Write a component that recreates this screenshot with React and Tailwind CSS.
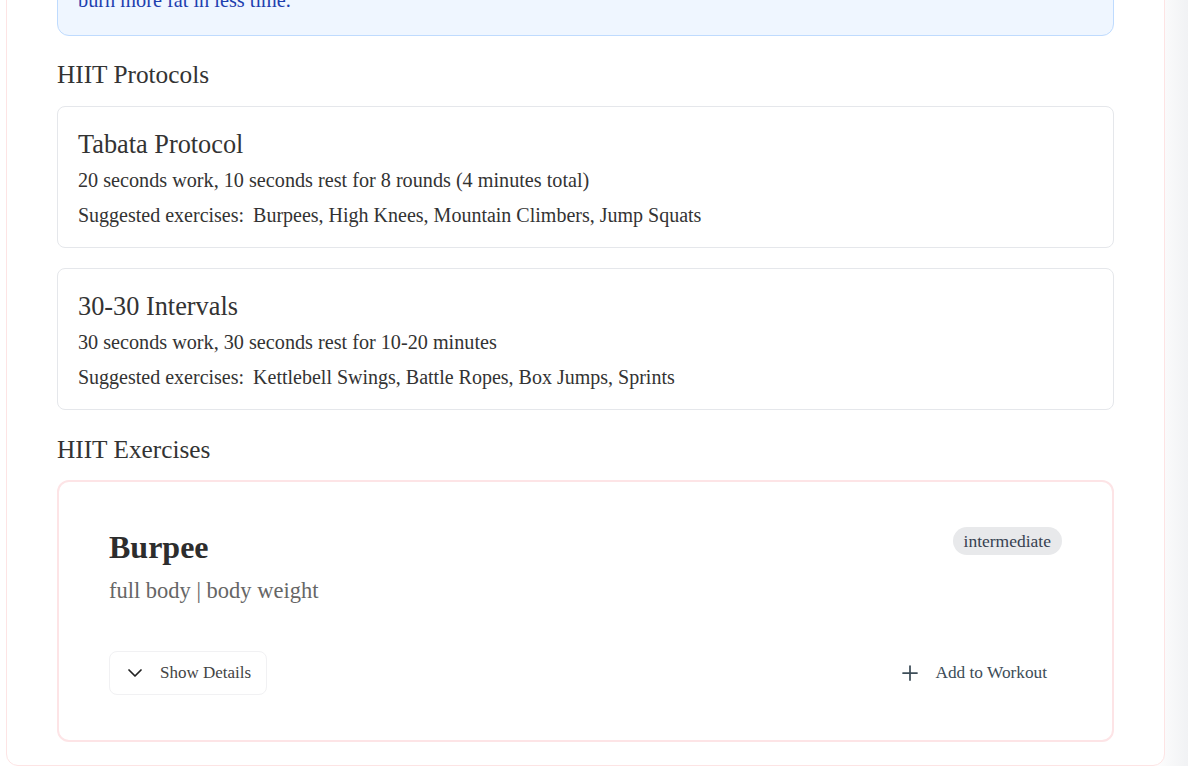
import React from "react";
import { ChevronDown, Plus } from "lucide-react";

const serif = { fontFamily: '"Liberation Serif", "DejaVu Serif", serif' };

function ProtocolCard({ title, desc, exercises }) {
  return (
    <div className="rounded-lg border border-[#e5e7eb] bg-white px-5 pt-5 pb-5">
      <div className="text-[26.3px] leading-[36px] text-[#333]">{title}</div>
      <div className="mt-[5px] text-[20.2px] leading-[24px] text-[#333]">{desc}</div>
      <div className="mt-[11px] text-[20px] leading-[24px] text-[#333]">
        <span className="mr-[9px]">Suggested exercises:</span>
        <span>{exercises}</span>
      </div>
    </div>
  );
}

export default function App() {
  return (
    <div className="h-[766px] overflow-hidden bg-linear-to-r from-white from-97% to-[#f1f2f4]" style={serif}>
      <div className="ml-[6px] mt-[-91px] w-[1159px] rounded-xl border border-[#fde4e4] bg-white pl-[50px] pr-[50px] pt-[27px] pb-[23px]">
        <div className="rounded-xl border border-[#bfdbfe] bg-[#eff6ff] px-5 pt-5 pb-[21px] text-[20.3px] leading-[28px] text-[#1e40af]">
          <p>High-Intensity Interval Training alternates short bursts of effort with brief recovery, helping you</p>
          <p>burn more fat in less time.</p>
        </div>

        <h2 className="mt-[22px] text-[25.3px] leading-[32px] text-[#333]">HIIT Protocols</h2>
        <div className="mt-4 flex flex-col gap-5">
          <ProtocolCard
            title="Tabata Protocol"
            desc="20 seconds work, 10 seconds rest for 8 rounds (4 minutes total)"
            exercises="Burpees, High Knees, Mountain Climbers, Jump Squats"
          />
          <ProtocolCard
            title="30-30 Intervals"
            desc="30 seconds work, 30 seconds rest for 10-20 minutes"
            exercises="Kettlebell Swings, Battle Ropes, Box Jumps, Sprints"
          />
        </div>

        <h2 className="mt-[23px] text-[25.3px] leading-[32px] text-[#333]">HIIT Exercises</h2>
        <div className="mt-[15px] rounded-xl border-2 border-[#fde4e6] bg-white px-[50px] pt-[45px] pb-[45px]">
          <div className="flex items-start justify-between">
            <div>
              <div className="text-[32px] font-bold leading-[40px] text-[#2d2d2d]">Burpee</div>
              <div className="mt-[10px] text-[22.5px] leading-[28px] text-[#666]">full body | body weight</div>
            </div>
            <span className="flex h-[28px] items-center rounded-full bg-[#e8e9eb] px-[11px] text-[17.5px] text-[#374151]">
              intermediate
            </span>
          </div>
          <div className="mt-[46px] flex items-center justify-between">
            <button className="flex h-[44px] items-center gap-[13px] rounded-lg border border-[#f1f1f3] bg-white pl-[13px] pr-[15px] text-[17px] text-[#444]">
              <ChevronDown size={24} strokeWidth={1.75} className="text-[#222]" />
              <span>Show Details</span>
            </button>
            <button className="flex h-[44px] items-center gap-[13px] rounded-lg border border-transparent pl-[14px] pr-[14px] text-[17.3px] text-[#3d4d58]">
              <Plus size={24} strokeWidth={1.75} className="text-[#3d4d58]" />
              <span>Add to Workout</span>
            </button>
          </div>
        </div>
      </div>
    </div>
  );
}
